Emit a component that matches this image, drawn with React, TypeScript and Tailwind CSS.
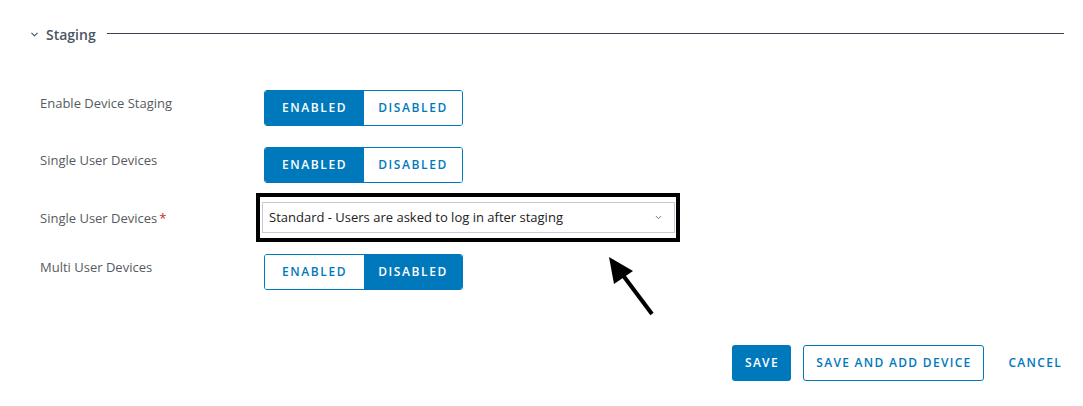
import { ChevronDown } from 'lucide-react'

const font = { fontFamily: '"Open Sans", "Liberation Sans", sans-serif' }

function Toggle({ enabled }: { enabled: boolean }) {
  const on = 'bg-[#0079bc] text-white'
  const off = 'bg-white text-[#0079bc]'
  return (
    <div className="flex h-[36px] w-[199px] overflow-hidden rounded-[3px] border border-[#0079bc]">
      <div className={`flex w-[99px] items-center justify-center text-[12px] font-semibold tracking-[1.6px] ${enabled ? on : off}`}>
        ENABLED
      </div>
      <div className={`flex flex-1 items-center justify-center text-[12px] font-semibold tracking-[1.6px] ${enabled ? off : on}`}>
        DISABLED
      </div>
    </div>
  )
}

function Row({ label, children }: { label: string; children: React.ReactNode }) {
  return (
    <div className="flex items-center">
      <div className="w-[264px] shrink-0 pl-[40px] text-[13px] text-[#555b61] -mt-[8px]">
        {label}
      </div>
      {children}
    </div>
  )
}

export default function App() {
  return (
    <div className="relative h-[406px] w-[1083px] bg-white" style={font}>
      <div className="flex items-center pt-[24px] pl-[29px] pr-[19px]">
        <ChevronDown size={11} strokeWidth={2.5} className="text-[#4a5563]" />
        <span className="ml-[6px] text-[14px] font-semibold text-[#4a5563]">Staging</span>
        <div className="ml-[11px] h-px flex-1 bg-[#3d4450] mt-[-2px]" />
      </div>

      <div className="mt-[45px] flex flex-col">
        <Row label="Enable Device Staging">
          <Toggle enabled />
        </Row>
        <div className="h-[21px]" />
        <Row label="Single User Devices">
          <Toggle enabled />
        </Row>
        <div className="h-[10px]" />
        <div className="flex items-center">
          <div className="w-[256px] shrink-0 pl-[40px] text-[13px] text-[#555b61] mt-[2px]">
            Single User Devices<span className="ml-[2px] text-[#d0271d]">*</span>
          </div>
          <div className="h-[49px] w-[424px] shrink-0 border-[4px] border-black pl-[2px] pr-[1px] pt-[5px]">
            <div className="flex h-[31px] items-center justify-between border border-[#c3ccd6] pl-[6px] pr-[11px] text-[13px] text-[#222]">
              <span>Standard - Users are asked to log in after staging</span>
              <ChevronDown size={9} strokeWidth={2.5} className="text-[#666]" />
            </div>
          </div>
        </div>
        <div className="h-[12px]" />
        <Row label="Multi User Devices">
          <Toggle enabled={false} />
        </Row>
      </div>

      <div className="mt-[55px] flex items-center justify-end pr-[21px]">
        <button className="h-[36px] w-[59px] rounded-[3px] bg-[#0079bc] text-[12px] font-semibold tracking-[1.3px] text-white">
          SAVE
        </button>
        <button className="ml-[12px] h-[36px] w-[181px] rounded-[3px] border border-[#0079bc] bg-white text-[12px] font-semibold tracking-[1.3px] text-[#0079bc]">
          SAVE AND ADD DEVICE
        </button>
        <button className="ml-[24px] text-[12px] font-semibold tracking-[1.3px] text-[#0079bc]">
          CANCEL
        </button>
      </div>

      <svg className="absolute left-[600px] top-[250px]" width="60" height="70" viewBox="0 0 60 70">
        <line x1="52" y1="64" x2="22" y2="24" stroke="black" strokeWidth="4" />
        <polygon points="9,7 33,21 14,34" fill="black" />
      </svg>
    </div>
  )
}
